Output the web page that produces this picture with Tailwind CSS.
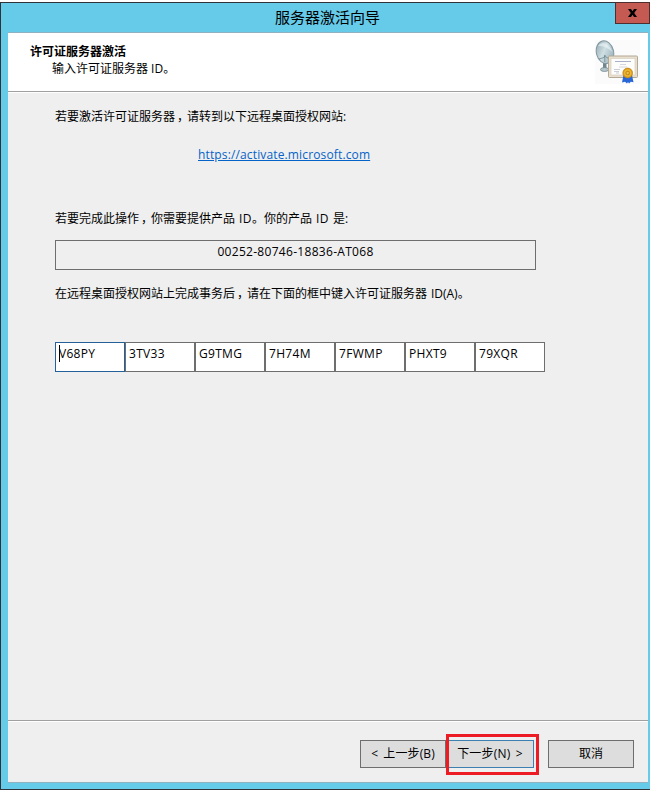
<!DOCTYPE html>
<html lang="zh-CN">
<head>
<meta charset="utf-8">
<title>服务器激活向导</title>
<script src="https://cdn.jsdelivr.net/npm/@tailwindcss/browser@4"></script>
</head>
<body class="w-[650px] h-[790px] overflow-hidden bg-white pt-[2px] text-black text-[12px] leading-[16px] font-['Open_Sans','Noto_Sans_CJK_SC',sans-serif]">
<div class="h-[788px] border-t border-l border-b border-[#30343a] bg-[#66cae9] flex flex-col">
  <header class="relative h-[29px] shrink-0 flex justify-center">
    <h1 class="text-[15px] leading-[28px] pl-[4px]">服务器激活向导</h1>
    <button class="absolute right-0 -top-px w-[35px] h-[22px] bg-[#c45a52] border border-[#4f2e30] flex items-center justify-center" aria-label="关闭">
      <svg width="9" height="8" viewBox="0 0 9 8"><path d="M0 0h3l1.500 2.200L6 0h3L6.200 4 9 8H6L4.500 5.800 3 8H0l2.800-4z"/></svg>
    </button>
  </header>
  <main class="ml-[7px] w-[640px] h-[751px] border-t border-b border-[#8eb2c0] bg-[#efefef] flex flex-col">
    <section class="h-[59px] shrink-0 bg-white border-b border-[#a0a0a0] flex justify-between pl-[22px] pr-[8px]">
      <div class="pt-[11px]">
        <h2 class="font-bold">许可证服务器激活</h2>
        <p class="pl-[22px] pt-[1px]">输入许可证服务器 ID。</p>
      </div>
      <svg class="mt-[7px]" width="45" height="44" viewBox="0 0 45 44">
        <defs>
          <linearGradient id="dish" x1="0" y1="0" x2="1" y2="1"><stop offset="0" stop-color="#8da3aa"/><stop offset=".45" stop-color="#cfdfe3"/><stop offset="1" stop-color="#8ba6ae"/></linearGradient>
          <radialGradient id="seal"><stop offset="0" stop-color="#ffd96a"/><stop offset=".35" stop-color="#c58a14"/><stop offset=".6" stop-color="#f2bd35"/><stop offset="1" stop-color="#c98a10"/></radialGradient>
        </defs>
        <path d="M0 0h45v44H0z" fill="#fbfbfb"/>
        <path d="M8 22h3.500v6H8z" fill="#71878d"/>
        <ellipse cx="9.500" cy="29.500" rx="4" ry="2" fill="#b4c5c9" stroke="#70848a" stroke-width=".7"/>
        <ellipse cx="10" cy="12.200" rx="8.600" ry="11.500" transform="rotate(-14 10 12.200)" fill="url(#dish)" stroke="#8296a0"/>
        <path d="M3 6C7 0 14 3 17.500 12 12 7 8 6 3 6z" fill="#eef7f8" opacity=".6"/>
        <path d="M4 19l5-1.500 1-2 1.500 2 4 1.500M9.800 15v7" fill="none" stroke="#6d858d" stroke-width=".8"/>
        <rect x="13.500" y="16" width="29" height="21.500" rx="1" fill="#e8dfcf" stroke="#b3a795"/>
        <rect x="16" y="18.500" width="24" height="16.500" fill="#fdfdfc" stroke="#d2cabc" stroke-width=".6"/>
        <path d="M20 21.500h16" stroke="#a8b0cc" stroke-width="1"/>
        <path d="M25 24.500h6M24 27h8" stroke="#c9cdd8" stroke-width=".8"/>
        <path d="M19 29.500h6M19 31.500h5M21 33h3" stroke="#b4b8c6" stroke-width=".7"/>
        <path d="M28.500 35L27 42.500l3-.8 2 1.800 1-1.500 1 1.500 1.800-1.800 2.700.5-1.500-7z" fill="#2867d5"/>
        <circle cx="32.700" cy="33" r="4.900" fill="url(#seal)" stroke="#c78a18" stroke-width=".7"/>
      </svg>
    </section>
    <section class="h-[629px] shrink-0 border-t border-white border-b border-b-[#a0a0a0] pl-[47px] flex flex-col items-start">
      <p class="mt-[16px]">若要激活许可证服务器<span class="inline-block w-[12px] pl-[2px] [font-feature-settings:'halt']">，</span>请转到以下远程桌面授权网站:</p>
      <a href="#" class="mt-[22px] ml-[143px] text-[#0563c8] underline tracking-[0.14px]">https://activate.microsoft.com</a>
      <p class="mt-[48px] [word-spacing:0.8px]">若要完成此操作<span class="inline-block w-[12px] pl-[2px] [font-feature-settings:'halt']">，</span>你需要提供产品 <span class="tracking-[0.5px]">ID</span>。你的产品 <span class="tracking-[0.5px]">ID</span> 是:</p>
      <div class="mt-[13px] w-[481px] h-[30px] border border-[#6e6e6e] text-center pt-[3px] tracking-[0.3px]">00252-80746-18836-AT068</div>
      <p class="mt-[16px] [word-spacing:0.8px]">在远程桌面授权网站上完成事务后<span class="inline-block w-[12px] pl-[2px] [font-feature-settings:'halt']">，</span>请在下面的框中键入许可证服务器 ID(A)。</p>
      <div class="mt-[40px] flex tracking-[0.3px]">
        <div class="w-[70px] h-[30px] bg-white border border-[#25609a] pl-[3px] pt-[2px] flex"><span class="w-px h-[17px] bg-black -mr-px"></span><span class="pt-[1px]">V68PY</span></div>
        <div class="w-[70px] h-[30px] bg-white border border-[#6e6e6e] pl-[3px] pt-[3px]">3TV33</div>
        <div class="w-[70px] h-[30px] bg-white border border-[#6e6e6e] pl-[3px] pt-[3px]">G9TMG</div>
        <div class="w-[70px] h-[30px] bg-white border border-[#6e6e6e] pl-[3px] pt-[3px]">7H74M</div>
        <div class="w-[70px] h-[30px] bg-white border border-[#6e6e6e] pl-[3px] pt-[3px]">7FWMP</div>
        <div class="w-[70px] h-[30px] bg-white border border-[#6e6e6e] pl-[3px] pt-[3px]">PHXT9</div>
        <div class="w-[70px] h-[30px] bg-white border border-[#6e6e6e] pl-[3px] pt-[3px]">79XQR</div>
      </div>
    </section>
    <footer class="grow border-t border-white flex items-start pl-[352px] pt-[18px]">
      <button class="w-[86px] h-[28px] border border-[#6e6e6e] bg-[#dddddd] tracking-[0.1px] [word-spacing:2px]">&lt; 上一步(B)</button>
      <div class="relative">
        <button class="w-[88px] h-[28px] border border-[#3c7fb1] bg-[#dddddd] tracking-[0.2px] [word-spacing:2px]">下一步(N) &gt;</button>
        <div class="absolute left-0 -top-[6px] w-[93px] h-[41px] border-[3px] border-[#ed1c24]"></div>
      </div>
      <button class="ml-[14px] w-[86px] h-[28px] border border-[#6e6e6e] bg-[#dddddd]">取消</button>
    </footer>
  </main>
</div>
</body>
</html>
